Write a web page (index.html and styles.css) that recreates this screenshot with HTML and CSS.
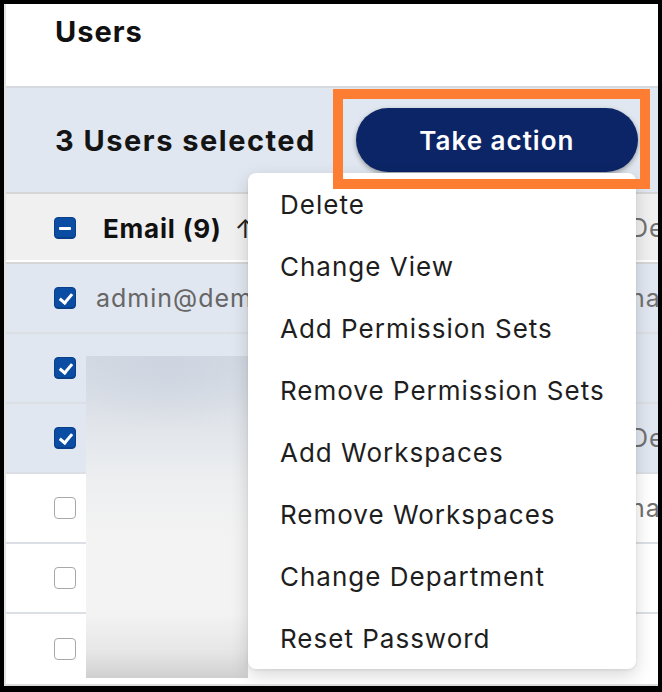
FILE: index.html
```html
<!DOCTYPE html>
<html lang="en">
<head>
<meta charset="utf-8">
<title>Users</title>
<link rel="stylesheet" href="styles.css">
</head>
<body>
<div class="frame">
  <header class="page-header"><h1 class="title">Users</h1></header>
  <section class="bulk-bar">
    <span class="bulk-count">3 Users selected</span>
    <button class="take-action" type="button">Take action</button>
  </section>
  <div class="table">
    <div class="row head">
      <span class="cb indeterminate"></span>
      <span class="cell email-head">Email (9) <span class="sort">↑</span></span>
      <span class="cell third muted">Department</span>
    </div>
    <div class="row selected">
      <span class="cb checked"></span>
      <span class="cell email">admin@demo.com</span>
      <span class="cell third muted">name</span>
    </div>
    <div class="row selected">
      <span class="cb checked"></span>
      <span class="cell email"></span>
      <span class="cell third muted"></span>
    </div>
    <div class="row selected">
      <span class="cb checked"></span>
      <span class="cell email"></span>
      <span class="cell third muted">Department</span>
    </div>
    <div class="row">
      <span class="cb"></span>
      <span class="cell email"></span>
      <span class="cell third muted">name</span>
    </div>
    <div class="row">
      <span class="cb"></span>
      <span class="cell email"></span>
      <span class="cell third muted"></span>
    </div>
    <div class="row last">
      <span class="cb"></span>
      <span class="cell email"></span>
      <span class="cell third muted"></span>
    </div>
  </div>
  <div class="redact"></div>
  <ul class="menu">
    <li>Delete</li>
    <li>Change View</li>
    <li>Add Permission Sets</li>
    <li>Remove Permission Sets</li>
    <li>Add Workspaces</li>
    <li>Remove Workspaces</li>
    <li>Change Department</li>
    <li>Reset Password</li>
  </ul>
  <div class="highlight"></div>
</div>
</body>
</html>
```
FILE: styles.css
```css
* { box-sizing: border-box; }
html, body { margin: 0; padding: 0; }
body {
  background: #000;
  padding: 4px 4px 6px 4px;
  width: 662px;
  height: 692px;
  font-family: Inter, "Noto Sans", sans-serif;
  overflow: hidden;
}
.frame {
  position: relative;
  width: 654px;
  height: 682px;
  background: #fff;
  border-left: 2px solid #e3e3e3;
  border-bottom: 2px solid #dcdcdc;
  overflow: hidden;
}
.page-header {
  height: 82px;
  padding: 11px 0 0 49px;
}
.title {
  margin: 0;
  font-size: 29px;
  font-weight: 700;
  line-height: 34px;
  letter-spacing: 1px;
  color: #111;
}
.bulk-bar {
  height: 106px;
  border-top: 2px solid #d6dae0;
  background: #e1e7f0;
  display: flex;
  align-items: center;
  padding-left: 49px;
}
.bulk-count {
  font-size: 29px;
  font-weight: 700;
  letter-spacing: 1.5px;
  color: #141414;
}
.take-action {
  margin-left: 40px;
  flex: none;
  width: 282px;
  height: 64px;
  border: none;
  border-radius: 32px;
  background: #0c2566;
  color: #fff;
  font-family: inherit;
  font-size: 26px;
  font-weight: 600;
  letter-spacing: 1px;
  box-shadow: 0 2px 5px rgba(0,0,0,0.35);
}
.table { display: flex; flex-direction: column; }
.row {
  height: 70px;
  display: flex;
  align-items: center;
  padding-left: 48px;
  border-bottom: 2px solid #dcdfe4;
  background: #fff;
}
.row.selected { background: #e1e7f0; }
.row.head {
  height: 72px;
  background: #f0f0f0;
  border-top: 2px solid #d6d6d6;
  border-bottom: 2px solid #d6d6d6;
  box-shadow: inset 0 -2px 0 #fff;
}
.row.last { border-bottom: none; }
.cb {
  flex: none;
  width: 22px;
  height: 22px;
  border-radius: 4px;
  border: 1.5px solid #a8a8a8;
  background: #fff;
  position: relative;
}
.cb.checked, .cb.indeterminate {
  background: #0b4da3;
  border: 1px solid #083f88;
  box-shadow: inset 0 -1px 0 #083f88;
}
.cb.checked::after {
  content: "";
  position: absolute;
  left: 7px;
  top: 3px;
  width: 5px;
  height: 10px;
  border-right: 3px solid #fff;
  border-bottom: 3px solid #fff;
  transform: rotate(40deg);
}
.cb.indeterminate::after {
  content: "";
  position: absolute;
  left: 4px;
  right: 4px;
  top: 9px;
  height: 3px;
  background: #fff;
  border-radius: 1px;
}
.cell { flex: none; font-size: 25px; color: #666; white-space: nowrap; letter-spacing: 1px; }
.email-head {
  margin-left: 27px;
  width: 527px;
  font-weight: 700;
  color: #111;
  font-size: 26px;
  letter-spacing: 0.8px;
}
.sort { font-weight: 400; margin-left: 6px; color: #222; }
.email { margin-left: 20px; width: 534px; overflow: hidden; }
.third { font-size: 25px; width: 28px; overflow: hidden; }
.muted { color: #707070; }
.redact {
  position: absolute;
  left: 80px;
  top: 352px;
  width: 162px;
  height: 322px;
  background:
    radial-gradient(ellipse 80% 20% at 50% 3%, rgba(205,212,224,0.9), rgba(205,212,224,0) 100%),
    linear-gradient(180deg, #d4dae3 0%, #dfe3e9 18%, #eceef0 38%, #f3f3f3 55%, #f3f3f3 80%, #e6e6e6 92%, #cfcfcf 100%);
}
.menu {
  position: absolute;
  left: 242px;
  top: 169px;
  width: 388px;
  margin: 0;
  padding: 0;
  list-style: none;
  background: #fff;
  border-radius: 8px;
  box-shadow: 0 6px 18px rgba(0,0,0,0.16), 0 1px 3px rgba(0,0,0,0.08);
}
.menu li {
  height: 62px;
  display: flex;
  align-items: center;
  padding-left: 32px;
  font-size: 26px;
  letter-spacing: 1px;
  color: #1e1e1e;
}
.highlight {
  position: absolute;
  left: 327px;
  top: 85px;
  width: 317px;
  height: 100px;
  border: 10px solid #fd7e33;
}
```
